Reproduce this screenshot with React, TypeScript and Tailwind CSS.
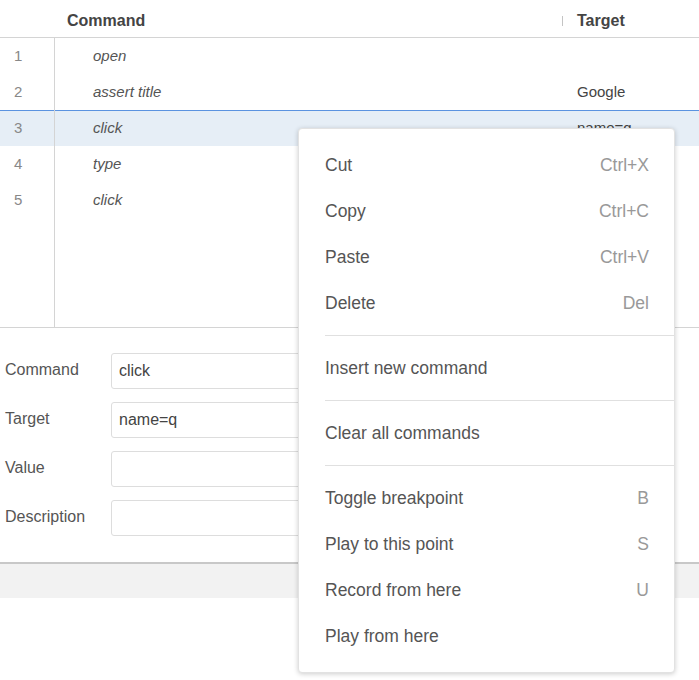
const commands = [
  { id: 1, command: "open", target: "" },
  { id: 2, command: "assert title", target: "Google" },
  { id: 3, command: "click", target: "name=q" },
  { id: 4, command: "type", target: "" },
  { id: 5, command: "click", target: "" }
]

const selectedId = 3

type TMenuItem = { label: string; shortcut?: string } | "divider"

const menuItems: Array<TMenuItem> = [
  { label: "Cut", shortcut: "Ctrl+X" },
  { label: "Copy", shortcut: "Ctrl+C" },
  { label: "Paste", shortcut: "Ctrl+V" },
  { label: "Delete", shortcut: "Del" },
  "divider",
  { label: "Insert new command" },
  "divider",
  { label: "Clear all commands" },
  "divider",
  { label: "Toggle breakpoint", shortcut: "B" },
  { label: "Play to this point", shortcut: "S" },
  { label: "Record from here", shortcut: "U" },
  { label: "Play from here" }
]

function CommandTable() {
  return (
    <div className="border-b border-[#d4d4d4]">
      <div className="flex h-[38px] items-center border-b border-[#d4d4d4] pt-[5px] text-[16px] font-bold text-[#444]">
        <div className="w-[67px]" />
        <div className="flex-1">Command</div>
        <div className="mr-[14px] h-[10px] w-px bg-[#c4c4c4]" />
        <div className="w-[122px]">Target</div>
      </div>
      <div className="relative h-[289px]">
        <div className="absolute left-[54px] top-0 h-full w-px bg-[#d4d4d4]" />
        {commands.map((row) => (
          <div
            key={row.id}
            className={
              "flex h-[36px] items-center text-[15px] " +
              (row.id === selectedId
                ? "border-t border-[#5b93e0] bg-[#e6eef6]"
                : "")
            }>
            <div className="w-[55px] pl-[14px] text-[#888]">{row.id}</div>
            <div className="flex-1 pl-[38px] italic text-[#555]">
              {row.command}
            </div>
            <div className="w-[122px] text-[#444]">{row.target}</div>
          </div>
        ))}
      </div>
    </div>
  )
}

function CommandForm() {
  const fields = [
    { label: "Command", value: "click" },
    { label: "Target", value: "name=q" },
    { label: "Value", value: "" },
    { label: "Description", value: "" }
  ]
  return (
    <div className="flex flex-col gap-[13px] px-[5px] pb-[26px] pt-[25px]">
      {fields.map((field) => (
        <div key={field.label} className="flex items-start">
          <div className="w-[106px] pt-[5px] text-[16px] text-[#555]">
            {field.label}
          </div>
          <div className="mr-[40px] flex h-[36px] flex-1 items-center rounded-[3px] border border-[#ddd] px-[7px] text-[16px] text-[#444]">
            {field.value}
          </div>
        </div>
      ))}
    </div>
  )
}

function ContextMenu() {
  return (
    <div className="absolute left-[298px] top-[128px] w-[377px] rounded-[4px] border border-[#e2e2e2] bg-white py-[13px] shadow-[0_1px_5px_rgba(0,0,0,0.2)]">
      {menuItems.map((item, i) =>
        item === "divider" ? (
          <div key={i} className="my-[9px] ml-[26px] h-px bg-[#e0e0e0]" />
        ) : (
          <div
            key={i}
            className="flex h-[46px] items-center justify-between pl-[26px] pr-[25px] text-[17.5px]">
            <span className="text-[#555]">{item.label}</span>
            <span className="text-[#999]">{item.shortcut}</span>
          </div>
        )
      )}
    </div>
  )
}

export default function App() {
  return (
    <div className="relative h-[680px] w-[699px] overflow-hidden bg-white font-['Liberation_Sans',Arial,sans-serif]">
      <CommandTable />
      <CommandForm />
      <div className="h-[36px] border-t-2 border-[#c8c8c8] bg-[#f2f2f2]" />
      <ContextMenu />
    </div>
  )
}
